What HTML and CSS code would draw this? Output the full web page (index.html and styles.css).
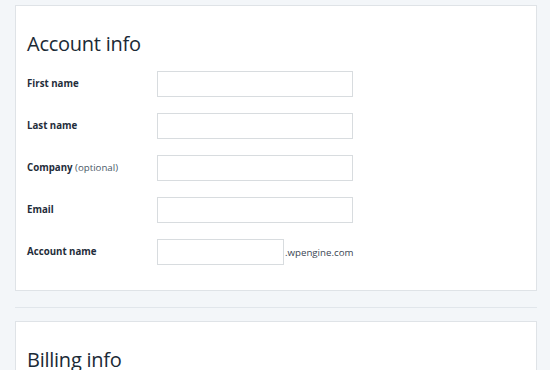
FILE: index.html
```html
<!DOCTYPE html>
<html>
<head>
<meta charset="utf-8">
<link rel="stylesheet" href="styles.css">
</head>
<body>
<section class="card">
  <h1 class="card-title">Account info</h1>
  <form class="form-grid">
    <label class="label">First name</label>
    <div class="field"><input class="input" type="text"></div>
    <label class="label">Last name</label>
    <div class="field"><input class="input" type="text"></div>
    <label class="label">Company <span class="optional">(optional)</span></label>
    <div class="field"><input class="input" type="text"></div>
    <label class="label">Email</label>
    <div class="field"><input class="input" type="text"></div>
    <label class="label">Account name</label>
    <div class="field"><input class="input input-short" type="text"><span class="suffix">.wpengine.com</span></div>
  </form>
</section>
<hr class="divider">
<section class="card">
  <h1 class="card-title">Billing info</h1>
</section>
</body>
</html>
```
FILE: styles.css
```css
html, body {
  margin: 0;
  padding: 0;
}
body {
  background: #f3f6f9;
  padding: 5px 13px 0 15px;
  font-family: "Open Sans", "Liberation Sans", sans-serif;
  color: #1e2b37;
  overflow: hidden;
  height: 370px;
  box-sizing: border-box;
}
.card {
  background: #ffffff;
  border: 1px solid #dfe3e7;
  padding: 23px 11px 25px 11px;
}
.card-title {
  margin: 0;
  font-size: 20px;
  font-weight: 400;
  line-height: 30px;
  color: #1b2a36;
  letter-spacing: -0.25px;
}
.form-grid {
  margin-top: 12px;
  display: grid;
  grid-template-columns: 130px 1fr;
  grid-auto-rows: 26px;
  row-gap: 16px;
}
.label {
  display: flex;
  align-items: center;
  white-space: pre;
  font-size: 9.7px;
  font-weight: 700;
  color: #1f2d3a;
  padding-bottom: 2px;
}
.optional {
  font-weight: 400;
  font-size: 9.7px;
  color: #4b5968;
}
.field {
  display: flex;
  align-items: center;
}
.input {
  box-sizing: border-box;
  width: 196px;
  height: 26px;
  border: 1px solid #d8dcdf;
  border-radius: 0;
  background: #fff;
  padding: 0 6px;
  margin: 0;
  outline: none;
}
.input-short {
  width: 127px;
}
.suffix {
  font-size: 9.7px;
  color: #3a4654;
  margin-left: 1px;
}
.divider {
  border: 0;
  border-top: 1px solid #e1e6eb;
  margin: 16px 0 13px 0;
  height: 0;
}
```
